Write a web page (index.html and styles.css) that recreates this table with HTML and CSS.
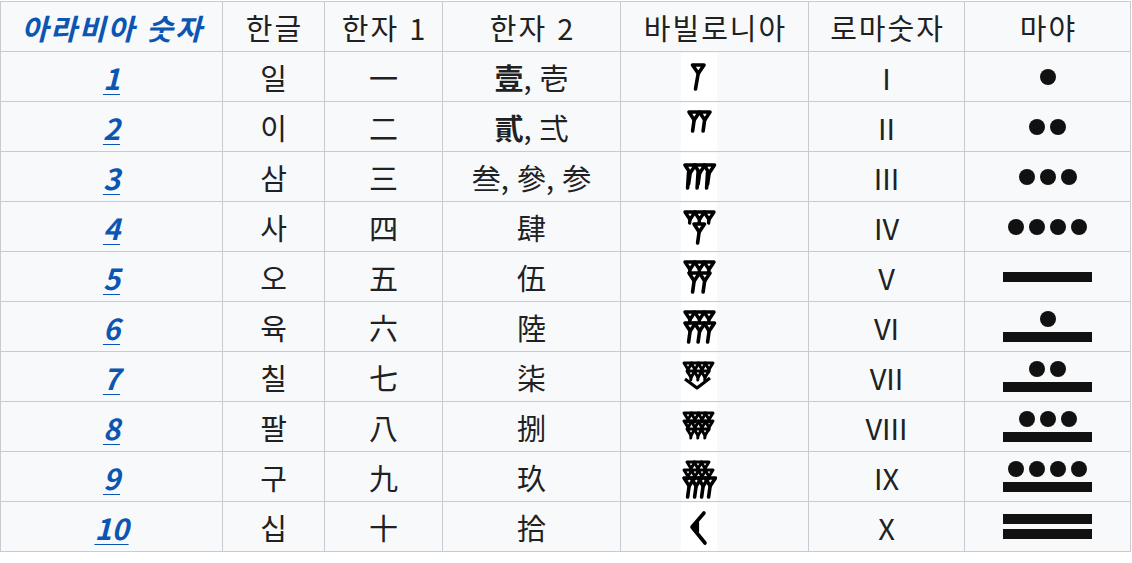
FILE: index.html
```html
<!DOCTYPE html>
<html lang="ko">
<head>
<meta charset="utf-8">
<title>숫자</title>
<link rel="stylesheet" href="styles.css">
</head>
<body>
<svg class="defs" width="0" height="0" aria-hidden="true">
  <defs>
    <g id="wl" fill="none" stroke="#000" stroke-width="3.6" stroke-linejoin="round" stroke-linecap="round">
      <path d="M0 0H11.5L5.8 8.5Z"/><path d="M5.8 8L3 24"/>
    </g>
    <g id="wm" fill="none" stroke="#000" stroke-width="3.6" stroke-linejoin="round" stroke-linecap="round">
      <path d="M0 0H10.5L5.2 8Z"/><path d="M5.2 7.5L3.6 19"/>
    </g>
    <g id="ws" fill="none" stroke="#000" stroke-width="3.4" stroke-linejoin="round" stroke-linecap="round">
      <path d="M0 0H10L5 7.5Z"/><path d="M5 7L4.6 11"/>
    </g>
    <g id="wt" fill="none" stroke="#000" stroke-width="3" stroke-linejoin="round" stroke-linecap="round">
      <path d="M0 0H8L4 6.5Z"/><path d="M4 6L3.8 9"/>
    </g>
  </defs>
</svg>
<table class="num">
  <colgroup>
    <col class="c1"><col class="c2"><col class="c3"><col class="c4"><col class="c5"><col class="c6"><col class="c7">
  </colgroup>
  <thead>
    <tr>
      <th class="arab ko">아라비아 숫자</th>
      <th class="ko">한글</th>
      <th class="ko">한자 1</th>
      <th class="ko">한자 2</th>
      <th class="ko">바빌로니아</th>
      <th class="ko">로마숫자</th>
      <th class="ko">마야</th>
    </tr>
  </thead>
  <tbody>
    <tr>
      <td><a class="n" href="#">1</a></td><td>일</td><td>一</td><td><span class="b">壹</span>, 壱</td>
      <td class="babc"><svg class="bab" viewBox="0 0 36 48"><use href="#wl" x="11.5" y="12"/></svg></td>
      <td>I</td>
      <td><div class="maya"><div class="dots"><i class="dot"></i></div></div></td>
    </tr>
    <tr>
      <td><a class="n" href="#">2</a></td><td>이</td><td>二</td><td><span class="b">貳</span>, 弍</td>
      <td class="babc"><svg class="bab" viewBox="0 0 36 48"><use href="#wm" x="8" y="9"/><use href="#wm" x="18.5" y="9"/></svg></td>
      <td>II</td>
      <td><div class="maya"><div class="dots"><i class="dot"></i><i class="dot"></i></div></div></td>
    </tr>
    <tr>
      <td><a class="n" href="#">3</a></td><td>삼</td><td>三</td><td>叁, 參, 参</td>
      <td class="babc"><svg class="bab" viewBox="0 0 36 48"><use href="#wm" x="4" y="12"/><use href="#wm" x="13.5" y="12"/><use href="#wm" x="23" y="12"/><path d="M7.6 19L6.6 35M17.1 19L16.1 35M26.6 19L25.6 35" stroke="#000" stroke-width="3.6" stroke-linecap="round"/></svg></td>
      <td>III</td>
      <td><div class="maya"><div class="dots"><i class="dot"></i><i class="dot"></i><i class="dot"></i></div></div></td>
    </tr>
    <tr>
      <td><a class="n" href="#">4</a></td><td>사</td><td>四</td><td>肆</td>
      <td class="babc"><svg class="bab" viewBox="0 0 36 48"><use href="#ws" x="4" y="9"/><use href="#ws" x="13.5" y="9"/><use href="#ws" x="23" y="9"/><use href="#wm" x="13" y="21"/></svg></td>
      <td>IV</td>
      <td><div class="maya"><div class="dots"><i class="dot"></i><i class="dot"></i><i class="dot"></i><i class="dot"></i></div></div></td>
    </tr>
    <tr>
      <td><a class="n" href="#">5</a></td><td>오</td><td>五</td><td>伍</td>
      <td class="babc"><svg class="bab" viewBox="0 0 36 48"><use href="#ws" x="4" y="9"/><use href="#ws" x="13.5" y="9"/><use href="#ws" x="23" y="9"/><use href="#wm" x="8" y="20"/><use href="#wm" x="18.5" y="20"/></svg></td>
      <td>V</td>
      <td><div class="maya"><i class="bar"></i></div></td>
    </tr>
    <tr>
      <td><a class="n" href="#">6</a></td><td>육</td><td>六</td><td>陸</td>
      <td class="babc"><svg class="bab" viewBox="0 0 36 48"><use href="#ws" x="4" y="9"/><use href="#ws" x="13.5" y="9"/><use href="#ws" x="23" y="9"/><use href="#wm" x="4" y="20"/><use href="#wm" x="13.5" y="20"/><use href="#wm" x="23" y="20"/></svg></td>
      <td>VI</td>
      <td><div class="maya"><div class="dots"><i class="dot"></i></div><i class="bar"></i></div></td>
    </tr>
    <tr>
      <td><a class="n" href="#">7</a></td><td>칠</td><td>七</td><td>柒</td>
      <td class="babc"><svg class="bab" viewBox="0 0 36 48"><use href="#wt" x="3" y="10"/><use href="#wt" x="10" y="10"/><use href="#wt" x="17" y="10"/><use href="#wt" x="24" y="10"/><use href="#wt" x="6" y="18"/><use href="#wt" x="13" y="18"/><use href="#wt" x="20" y="18"/><path d="M4 26 L16 35 L29 25" fill="none" stroke="#000" stroke-width="3.2" stroke-linejoin="round"/></svg></td>
      <td>VII</td>
      <td><div class="maya"><div class="dots"><i class="dot"></i><i class="dot"></i></div><i class="bar"></i></div></td>
    </tr>
    <tr>
      <td><a class="n" href="#">8</a></td><td>팔</td><td>八</td><td>捌</td>
      <td class="babc"><svg class="bab" viewBox="0 0 36 48"><use href="#wt" x="3" y="10"/><use href="#wt" x="10" y="10"/><use href="#wt" x="17" y="10"/><use href="#wt" x="24" y="10"/><use href="#wt" x="3" y="18"/><use href="#wt" x="10" y="18"/><use href="#wt" x="17" y="18"/><use href="#wt" x="24" y="18"/><use href="#wt" x="6" y="26"/><use href="#wt" x="13" y="26"/><use href="#wt" x="20" y="26"/></svg></td>
      <td>VIII</td>
      <td><div class="maya"><div class="dots"><i class="dot"></i><i class="dot"></i><i class="dot"></i></div><i class="bar"></i></div></td>
    </tr>
    <tr>
      <td><a class="n" href="#">9</a></td><td>구</td><td>九</td><td>玖</td>
      <td class="babc"><svg class="bab" viewBox="0 0 36 48"><use href="#wt" x="6" y="9"/><use href="#wt" x="13" y="9"/><use href="#wt" x="20" y="9"/><use href="#wt" x="3" y="17"/><use href="#wt" x="10" y="17"/><use href="#wt" x="17" y="17"/><use href="#wt" x="24" y="17"/><use href="#wm" x="3" y="25"/><use href="#wm" x="10" y="25"/><use href="#wm" x="17" y="25"/><use href="#wm" x="24" y="25"/></svg></td>
      <td>IX</td>
      <td><div class="maya"><div class="dots"><i class="dot"></i><i class="dot"></i><i class="dot"></i><i class="dot"></i></div><i class="bar"></i></div></td>
    </tr>
    <tr>
      <td><a class="n" href="#">10</a></td><td>십</td><td>十</td><td>拾</td>
      <td class="babc"><svg class="bab" viewBox="0 0 36 48"><path d="M23 10 L11 24 L24 40" fill="none" stroke="#000" stroke-width="3.6" stroke-linejoin="round" stroke-linecap="round"/><path d="M11 24 L17 19.5 L17 28.5 Z" fill="#000" stroke="#000" stroke-width="2.2" stroke-linejoin="round"/></svg></td>
      <td>X</td>
      <td><div class="maya"><i class="bar"></i><i class="bar"></i></div></td>
    </tr>
  </tbody>
</table>
</body>
</html>
```
FILE: styles.css
```css
html, body {
  margin: 0;
  padding: 0;
  background: #ffffff;
}

body {
  font-family: "Noto Sans CJK KR", "Noto Sans", sans-serif;
  color: #202122;
  padding-top: 1px;
}

.defs {
  display: block;
  width: 0;
  height: 0;
  overflow: hidden;
}

.num {
  border-collapse: collapse;
  table-layout: fixed;
  width: 1130px;
  background: #f8f9fa;
  border: 1px solid #c8ccd1;
}

.c1 { width: 222px; }
.c2 { width: 102px; }
.c3 { width: 118px; }
.c4 { width: 178px; }
.c5 { width: 188px; }
.c6 { width: 156px; }
.c7 { width: 166px; }

.num th,
.num td {
  border: 1px solid #c8ccd1;
  text-align: center;
  vertical-align: middle;
  padding: 0;
  font-size: 29px;
  font-weight: 400;
  line-height: 32px;
  color: #202122;
}

.num thead tr { height: 50px; }
.num tbody tr { height: 50px; }

.num th.ko,
.num td:nth-child(2) {
  letter-spacing: 2px;
  text-indent: 2px;
}

.num th.arab {
  font-weight: 700;
  font-style: italic;
  color: #0b56b3;
}

.n {
  color: #0b56b3;
  font-weight: 700;
  font-style: italic;
  text-decoration: underline;
  text-decoration-thickness: 1px;
  text-underline-offset: 4px;
  padding: 0 2px;
}

.b {
  font-weight: 700;
}

.num td.babc {
  padding-right: 32px;
}

.bab {
  display: block;
  margin: 0 auto;
  width: 36px;
  height: 48px;
  background: #ffffff;
}

.maya {
  display: flex;
  flex-direction: column;
  align-items: center;
  justify-content: center;
  gap: 5px;
}

.dots {
  display: flex;
  gap: 5px;
}

.dot {
  display: block;
  width: 16px;
  height: 16px;
  border-radius: 50%;
  background: #111111;
}

.bar {
  display: block;
  width: 89px;
  height: 10px;
  background: #111111;
}
```
